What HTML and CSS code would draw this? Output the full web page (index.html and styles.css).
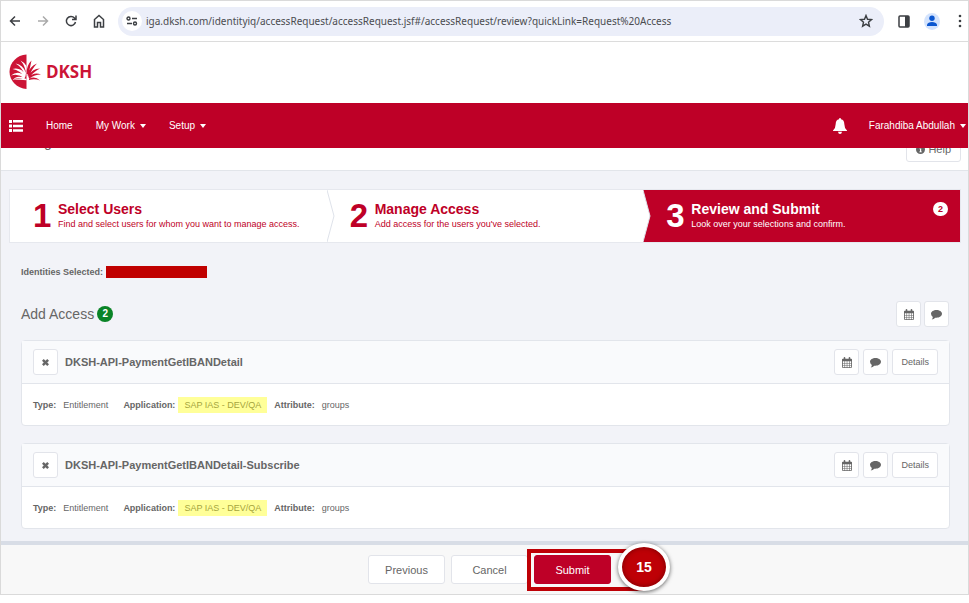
FILE: index.html
```html
<!DOCTYPE html>
<html lang="en">
<head>
<meta charset="utf-8">
<title>Manage User Access</title>
<meta name="viewport" content="width=device-width, initial-scale=1">
<link rel="stylesheet" href="styles.css">
</head>
<body>
<svg class="defs" aria-hidden="true">
  <symbol id="calendar" viewBox="0 0 12 13">
    <path fill="currentColor" fill-rule="evenodd" d="M1 2h1V1q0-1 1-1t1 1v1h4V1q0-1 1-1t1 1v1h1q1 0 1 1v9q0 1-1 1H1q-1 0-1-1V3q0-1 1-1zM1 5v2h2V5zm2.700 0v2h2V5zm2.700 0v2h2V5zm2.700 0v2H11V5zM1 7.700v2h2v-2zm2.700 0v2h2v-2zm2.700 0v2h2v-2zm2.700 0v2H11v-2zM1 10.300v2h2v-2zm2.700 0v2h2v-2zm2.700 0v2h2v-2zm2.700 0v2H11v-2z"/>
  </symbol>
  <symbol id="comment" viewBox="0 0 12 12">
    <path fill="currentColor" d="M6 1c3.300 0 6 1.800 6 4.300S9.300 9.600 6 9.600q-.7 0-1.300-.1Q3 11.200.8 11.400q1-1 1.200-2.700Q0 7.400 0 5.300C0 2.800 2.700 1 6 1z"/>
  </symbol>
  <symbol id="cross" viewBox="0 0 10 10">
    <path fill="currentColor" d="M0 2.500L2.500 0 5 2.500 7.500 0 10 2.500 7.500 5 10 7.500 7.500 10 5 7.500 2.500 10 0 7.500 2.500 5z"/>
  </symbol>
</svg>
<div class="window">
  <div class="browser">
    <button class="tool" aria-label="Back"><svg width="12" height="12" viewBox="0 0 12 12"><path d="M11 6H1.500M6 1.500L1.500 6 6 10.500"/></svg></button>
    <button class="tool off" aria-label="Forward"><svg width="12" height="12" viewBox="0 0 12 12"><path d="M1 6h9.500M6 1.500L10.500 6 6 10.500"/></svg></button>
    <button class="tool" aria-label="Reload"><svg width="12" height="12" viewBox="0 0 12 12"><path d="M10.500 7A4.600 4.600 0 1 1 9.500 3L11 4.500M11 .5v4H7"/></svg></button>
    <button class="tool" aria-label="Home page"><svg width="12" height="14" viewBox="0 0 12 14"><path d="M1.500 5.500L6 1.500l4.500 4V13h-3V8.500h-3V13h-3z"/></svg></button>
    <div class="address">
      <button class="site" aria-label="Site information"><svg width="12" height="10" viewBox="0 0 12 10"><circle cx="2.500" cy="2.500" r="1.500"/><path d="M6 2.500h5M1 7.500h5"/><circle cx="9" cy="7.500" r="1.500"/></svg></button>
      <input class="url" type="text" aria-label="Address" value="iga.dksh.com/identityiq/accessRequest/accessRequest.jsf#/accessRequest/review?quickLink=Request%20Access">
      <button class="star" aria-label="Bookmark"><svg width="14" height="14" viewBox="0 0 14 14"><path d="M7 1.500l1.500 3.800 4 .3-3 2.600.9 4L7 10.100l-3.400 2.100.9-4-3-2.600 4-.3z"/></svg></button>
    </div>
    <button class="tool panel" aria-label="Side panel"><svg width="12" height="13" viewBox="0 0 12 13"><rect x="1" y="1" width="10" height="11" rx="1"/><path class="solid" d="M7 1h4v11H7z"/></svg></button>
    <button class="profile" aria-label="Profile"><svg width="10" height="12" viewBox="0 0 10 12"><circle cx="5" cy="3.200" r="2.700"/><path d="M0 11V9.500Q1 7 5 7t5 2.500V11z"/></svg></button>
    <button class="tool dots" aria-label="Menu"><svg width="4" height="14" viewBox="0 0 4 14"><circle cx="2" cy="2" r="1.300"/><circle cx="2" cy="7" r="1.300"/><circle cx="2" cy="12" r="1.300"/></svg></button>
  </div>

  <header class="brand">
    <a href="#" class="logo" aria-label="DKSH">
      <svg width="32" height="36" viewBox="0 0 32 36">
        <path fill="#cc1436" d="M17.500.5v34.500C8 34.500.5 27 .5 17.800S8 1 17.500.5z"/>
        <g fill="#fff">
          <path d="M17.500 22Q16.500 12 11.500 6.500 15.500 8.500 17.500 12zM16.500 22.500Q13 13 6.500 9.500 14 10.500 17 19zM16 23.500Q11 16 3.500 15 12 13 16.500 21zM15.500 24.200Q9 19 2 21.500 9 15.500 16.500 22.500zM15 25.500Q8 22.500 3.500 26.500 7 20.500 16 24z"/>
          <path d="M4 25.500q7-1.500 13.500-.8v1.500q-7-.6-13.500-.7z"/>
        </g>
        <g fill="#cc1436">
          <path d="M17.500 20Q17.500 11 22.500 6.500 21.500 12 19.300 20.500zM18.500 21.500Q20.500 12 28 9.500 23.500 14 20 22zM19 22.500Q23 14.500 31 14.500 25.500 17 20.500 23zM19.500 23.500Q25 17.500 32 20.500 25.500 20.500 20.500 24.500zM20 24.800Q26 21.500 31 26.500 26 24.500 20 26z"/>
        </g>
      </svg>
      <span>DKSH</span>
    </a>
  </header>

  <nav class="nav">
    <button class="menu" aria-label="Menu"><svg width="14" height="12" viewBox="0 0 14 12"><path d="M0 0h3v3H0zM4 0h10v2.500H4zM0 4.500h3v3H0zM4 4.700h10v2.500H4zM0 9h3v3H0zM4 9.300h10v2.500H4z"/></svg></button>
    <a href="#">Home</a>
    <a href="#">My Work <i class="caret"></i></a>
    <a href="#">Setup <i class="caret"></i></a>
    <button class="bell" aria-label="Notifications"><svg width="14" height="16" viewBox="0 0 14 16"><path d="M7 0q1 0 1 1.300Q11.300 2 11.300 6q0 4 2.700 6.500v.5H0v-.5Q2.700 10 2.700 6 2.700 2 6 1.300 6 0 7 0zM5 13.800h4Q8.700 16 7 16t-2-2.200z"/></svg></button>
    <a href="#">Farahdiba Abdullah <i class="caret"></i></a>
  </nav>

  <div class="titlebar">
    <h1>Manage User Access</h1>
    <button class="btn help"><svg width="9" height="9" viewBox="0 0 9 9"><circle cx="4.500" cy="4.500" r="4.500" fill="currentColor"/><path fill="#fff" d="M4 1.500h1.200v1.200H4zM3.500 3.500h1.700v3h.6v.8H3.300v-.8H4V4.300h-.5z"/></svg> Help</button>
  </div>

  <main class="content">
    <ol class="steps">
      <li><a href="#" class="step"><b class="num">1</b><span class="label"><strong>Select Users</strong><small>Find and select users for whom you want to manage access.</small></span></a></li>
      <li><svg class="notch" viewBox="0 0 8 54" preserveAspectRatio="none"><path d="M0 0l7 27-7 27"/></svg><a href="#" class="step"><b class="num">2</b><span class="label"><strong>Manage Access</strong><small>Add access for the users you've selected.</small></span></a></li>
      <li class="current"><svg class="notch" viewBox="0 0 8 54" preserveAspectRatio="none"><path d="M0 0l7 27-7 27"/></svg><a href="#" class="step"><b class="num">3</b><span class="label"><strong>Review and Submit</strong><small>Look over your selections and confirm.</small></span><span class="count">2</span></a></li>
    </ol>

    <p class="identities">Identities Selected: <span class="redacted"></span></p>

    <div class="section">
      <h2>Add Access</h2><span class="badge">2</span>
      <div class="actions">
        <button class="btn icon" aria-label="Dates"><svg width="10" height="11"><use href="#calendar"/></svg></button>
        <button class="btn icon" aria-label="Comment"><svg width="11" height="11"><use href="#comment"/></svg></button>
      </div>
    </div>

    <article class="card">
      <div class="card-head">
        <button class="btn icon" aria-label="Remove"><svg width="7" height="7"><use href="#cross"/></svg></button>
        <h3>DKSH-API-PaymentGetIBANDetail</h3>
        <div class="actions">
          <button class="btn icon" aria-label="Dates"><svg width="10" height="11"><use href="#calendar"/></svg></button>
          <button class="btn icon" aria-label="Comment"><svg width="11" height="11"><use href="#comment"/></svg></button>
          <button class="btn">Details</button>
        </div>
      </div>
      <dl>
        <div class="type"><dt>Type:</dt><dd>Entitlement</dd></div>
        <div class="app"><dt>Application:</dt><dd><mark>SAP IAS - DEV/QA</mark></dd></div>
        <div><dt>Attribute:</dt><dd>groups</dd></div>
      </dl>
    </article>

    <article class="card">
      <div class="card-head">
        <button class="btn icon" aria-label="Remove"><svg width="7" height="7"><use href="#cross"/></svg></button>
        <h3>DKSH-API-PaymentGetIBANDetail-Subscribe</h3>
        <div class="actions">
          <button class="btn icon" aria-label="Dates"><svg width="10" height="11"><use href="#calendar"/></svg></button>
          <button class="btn icon" aria-label="Comment"><svg width="11" height="11"><use href="#comment"/></svg></button>
          <button class="btn">Details</button>
        </div>
      </div>
      <dl>
        <div class="type"><dt>Type:</dt><dd>Entitlement</dd></div>
        <div class="app"><dt>Application:</dt><dd><mark>SAP IAS - DEV/QA</mark></dd></div>
        <div><dt>Attribute:</dt><dd>groups</dd></div>
      </dl>
    </article>
  </main>

  <footer class="footer">
    <button class="btn wide">Previous</button>
    <button class="btn wide">Cancel</button>
    <div class="callout">
      <button class="btn wide submit">Submit</button>
      <span class="marker">15</span>
    </div>
  </footer>
</div>
</body>
</html>
```
FILE: styles.css
```css
* { box-sizing: border-box; }
body { margin: 0; background: #fff; color: #666; font: 9px/14px "Liberation Sans", Arial, sans-serif; }
button, input { font: inherit; color: inherit; margin: 0; padding: 0; border: 0; background: none; }
a { color: inherit; text-decoration: none; }
h1, h2, h3, p, ol, dl, dd { margin: 0; padding: 0; }
.defs { position: absolute; width: 0; height: 0; }
svg { display: block; }
.window { border: 1px solid #dadada; overflow: hidden; }

.browser { display: flex; align-items: center; height: 41px; padding: 0 6px 0 8px; border-bottom: 1px solid #dcdcdc; }
.tool { width: 12px; margin-right: 16px; flex: none; }
.tool svg { fill: none; stroke: #3c3f43; stroke-width: 1.5; }
.tool.off svg { stroke: #aaa; }
.tool .solid { fill: #3c3f43; stroke: none; }
.tool.panel { margin-right: 14px; }
.tool.dots { width: 4px; margin: 0; }
.tool.dots svg { fill: #3c3f43; stroke: none; }
.address { flex: 1; display: flex; align-items: center; height: 29px; margin: 0 14px 0 -3px; padding: 0 11px 0 4px; border-radius: 15px; background: #ebeef9; }
.site { display: grid; place-items: center; width: 20px; height: 20px; border-radius: 50%; background: #fff; }
.site svg, .star svg { fill: none; stroke: #3c3f43; stroke-width: 1.4; }
.url { flex: 1; min-width: 0; margin: 0 8px 0 4px; font: 10px/16px "Noto Sans", sans-serif; color: #4a4c50; }
.profile { display: grid; place-items: center; width: 16px; height: 17px; margin-right: 18px; border-radius: 50%; background: #d3e3fd; flex: none; }
.profile svg { fill: #0b57d0; }

.brand { height: 61px; padding: 12px 8px; }
.logo { display: inline-flex; align-items: center; gap: 5px; color: #cc1436; font: 700 17px/36px "Open Sans", sans-serif; }

.nav { display: flex; align-items: center; height: 45px; padding: 0 2px 0 8px; background: #be0027; color: #fff; font-size: 10px; }
.nav svg { fill: #fff; }
.nav a { display: flex; align-items: center; gap: 5px; margin-right: 23px; }
.nav a:last-child { margin-right: 0; }
.menu { margin-right: 23px; }
.bell { margin: 0 22px 0 auto; }
.caret { border: 3px solid transparent; border-top: 4px solid #fff; border-bottom: 0; }

.titlebar { display: flex; justify-content: space-between; align-items: flex-end; height: 23px; padding: 0 7px 8px 8px; border-bottom: 1px solid #e2e5ea; overflow: hidden; }
.titlebar h1 { font-weight: 400; font-size: 14px; line-height: 20px; margin-bottom: 10px; }

.btn { display: inline-flex; align-items: center; justify-content: center; height: 26px; padding: 0 8px; border: 1px solid #e2e4ea; border-radius: 3px; background: #fff; color: #666; white-space: nowrap; }
.btn.icon { width: 25px; padding: 0; }
.btn.help { gap: 3px; padding: 0 9px; font-size: 11px; }
.btn.wide { width: 77px; height: 29px; font-size: 11px; }

.content { padding: 18px 7px 12px 8px; background: #f2f3f8; }
.steps { display: grid; grid-template-columns: repeat(3, minmax(0, 1fr)); list-style: none; border: 1px solid #e6e8ee; background: #fff; color: #be0027; }
.steps li { position: relative; height: 52px; }
.steps .current { background: #be0027; color: #fff; }
.notch { position: absolute; left: 0; top: 0; width: 8px; height: 100%; fill: #fff; stroke: #dde1ea; }
.step { display: flex; align-items: center; height: 100%; padding: 0 12px 0 23px; }
.num { flex: none; width: 25px; font-size: 33px; line-height: 40px; }
.label { flex: 1; white-space: nowrap; }
.label strong { display: block; font-size: 14px; line-height: 16px; }
.label small { display: block; font-size: 9px; line-height: 14px; }
.count { align-self: flex-start; width: 15px; margin-top: 12px; border-radius: 7px; background: #fff; color: #be0027; font-weight: 700; line-height: 14px; text-align: center; }

.identities { display: flex; align-items: center; gap: 3px; padding: 22px 12px; font-weight: 700; }
.redacted { width: 101px; height: 12px; background: #c00000; }
.section { display: flex; align-items: center; gap: 3px; padding: 0 0 13px 12px; }
.section h2 { font-weight: 400; font-size: 14px; line-height: 20px; }
.badge { width: 16px; border-radius: 8px; background: #0a8427; color: #fff; font-weight: 700; font-size: 10px; line-height: 16px; text-align: center; }
.actions { display: flex; gap: 4px; margin-left: auto; }
.section .actions { gap: 3px; margin-right: 12px; }
.card { margin: 0 11px 17px 12px; border: 1px solid #e2e5eb; border-radius: 4px; background: #fff; }
.card:last-child { margin-bottom: 0; }
.card-head { display: flex; align-items: center; gap: 7px; height: 43px; padding: 0 11px; border-bottom: 1px solid #e2e5eb; background: #f9fafc; }
.card h3 { font-size: 11px; }
.card dl { display: flex; align-items: center; height: 41px; padding: 0 11px; }
.card dl div { display: flex; align-items: center; gap: 7px; margin-right: 15px; }
.card dl .app { gap: 3px; margin-right: 7px; }
.card dt { font-weight: 700; }
mark { display: block; padding: 1px 6px; background: #ffff99; color: #a5a53d; }

.footer { display: flex; align-items: center; gap: 6px; height: 53px; padding-left: 367px; border-top: 4px solid #d8dde6; background: #f8f8f8; }
.callout { position: relative; display: flex; align-items: center; width: 118px; height: 42px; margin-left: -7px; padding-left: 3px; border: 4px solid #be0006; background: #f8f8f8; }
.submit { border-color: #be0027; background: #be0027; color: #fff; }
.marker { position: absolute; right: -29px; top: -10px; width: 52px; height: 48px; border: 4px solid #fff; border-radius: 50%; background: #be0006; color: #fff; font: 700 14px/40px "Liberation Sans", Arial, sans-serif; text-align: center; box-shadow: 0 1px 4px rgba(0,0,0,.6), inset 0 0 4px 1px rgba(80,0,0,.5); }
```
